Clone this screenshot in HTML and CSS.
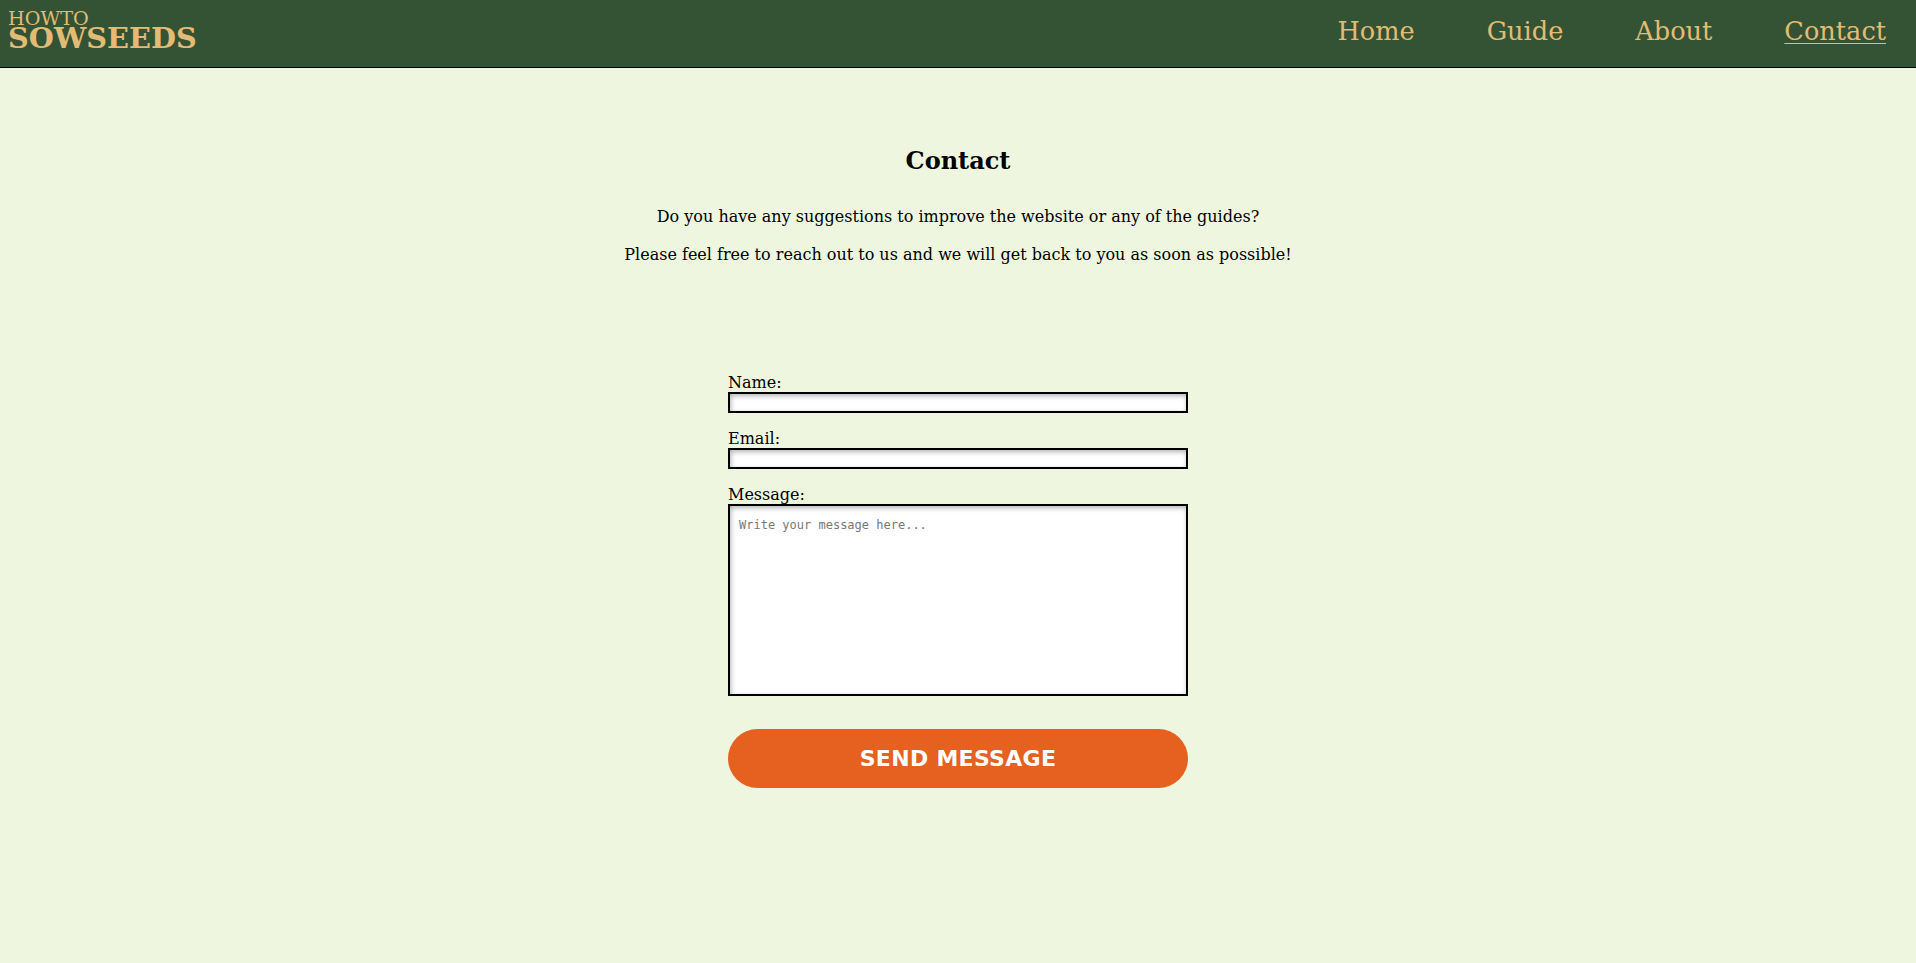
FILE: index.html
```html
<!DOCTYPE html>
<html lang="en">
<head>
<meta charset="utf-8">
<title>Contact - How To Sow Seeds</title>
<link rel="stylesheet" href="styles.css">
</head>
<body>
<header class="site-header">
  <a class="logo" href="#">
    <span class="logo-top">HOWTO</span>
    <span class="logo-main">SOWSEEDS</span>
  </a>
  <nav class="main-nav">
    <a class="nav-link" href="#">Home</a>
    <a class="nav-link" href="#">Guide</a>
    <a class="nav-link" href="#">About</a>
    <a class="nav-link active" href="#">Contact</a>
  </nav>
</header>
<main class="content">
  <section class="intro">
    <h2 class="title">Contact</h2>
    <p class="lead">Do you have any suggestions to improve the website or any of the guides?</p>
    <p class="lead">Please feel free to reach out to us and we will get back to you as soon as possible!</p>
  </section>
  <form class="contact-form">
    <div class="field">
      <label class="field-label" for="name">Name:</label>
      <input class="field-input" type="text" id="name">
    </div>
    <div class="field">
      <label class="field-label" for="email">Email:</label>
      <input class="field-input" type="email" id="email">
    </div>
    <div class="field">
      <label class="field-label" for="message">Message:</label>
      <textarea class="field-input field-textarea" id="message" placeholder="Write your message here..."></textarea>
    </div>
    <button class="send-btn" type="button">SEND MESSAGE</button>
  </form>
</main>
</body>
</html>
```
FILE: styles.css
```css
html, body {
  margin: 0;
  padding: 0;
}
body {
  background: #eef6df;
  font-family: "DejaVu Serif", serif;
  font-size: 16px;
  color: #000;
  min-height: 963px;
}
.site-header {
  display: flex;
  justify-content: space-between;
  align-items: flex-start;
  height: 67px;
  box-sizing: content-box;
  background: #335334;
  border-bottom: 1px solid #000;
  padding: 0 30px 0 8px;
}
.logo {
  display: flex;
  flex-direction: column;
  text-decoration: none;
  color: #e2bc74;
  padding-top: 10px;
}
.logo-top {
  display: block;
  font-size: 19.2px;
  line-height: 18px;
}
.logo-main {
  display: block;
  font-size: 28.8px;
  font-weight: bold;
  line-height: 20px;
}
.main-nav {
  display: flex;
  gap: 72px;
  padding-top: 16px;
}
.nav-link {
  color: #e2bc74;
  text-decoration: none;
  font-size: 25.6px;
  line-height: 30px;
}
.nav-link.active {
  text-decoration: underline;
  text-underline-offset: 3px;
  text-decoration-thickness: 1px;
}
.content {
  padding-top: 79px;
}
.intro {
  text-align: center;
}
.title {
  margin: 0 0 32px;
  font-size: 24px;
  line-height: 28px;
  font-weight: bold;
}
.lead {
  margin: 0 0 19px;
  line-height: 19px;
}
.contact-form {
  width: 460px;
  margin: 109px auto 0;
  display: flex;
  flex-direction: column;
}
.field {
  display: flex;
  flex-direction: column;
  margin-bottom: 16px;
}
.field-label {
  line-height: 19px;
}
.field-input {
  box-sizing: border-box;
  width: 100%;
  height: 21px;
  margin: 0;
  border: 2px solid #000;
  background: #fff;
  box-shadow: inset 1px 2px 5px rgba(0, 0, 0, 0.3);
  font-family: "DejaVu Sans Mono", monospace;
  font-size: 12px;
  padding: 0 4px;
  outline: none;
}
.field-textarea {
  height: 192px;
  padding: 12px 9px 8px;
  line-height: 14px;
  resize: none;
}
.field-textarea::placeholder {
  color: #777;
}
.send-btn {
  margin-top: 17px;
  height: 59px;
  width: 100%;
  border: none;
  border-radius: 30px;
  background: #e66020;
  color: #fff;
  font-family: "DejaVu Sans", sans-serif;
  font-weight: bold;
  font-size: 22px;
  letter-spacing: 0.3px;
  cursor: pointer;
}
```
